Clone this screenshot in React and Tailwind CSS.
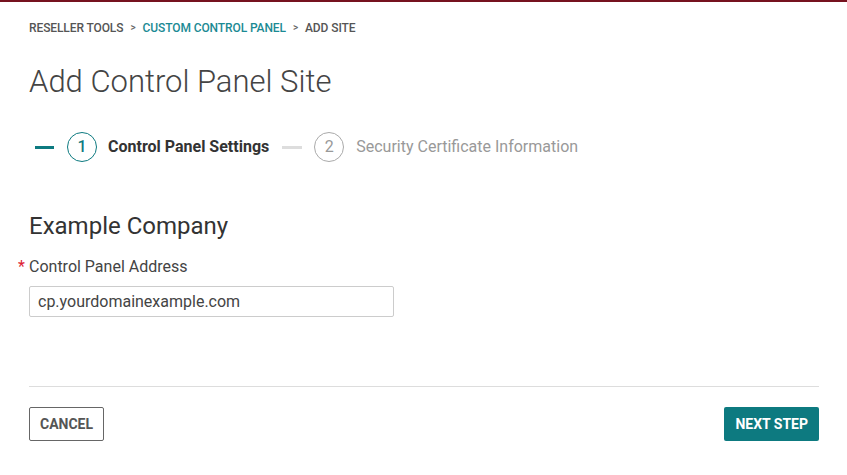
export default function App() {
  return (
    <div className="min-h-[475px] w-[847px] border-t-2 border-[#76121f] bg-white font-['Roboto',sans-serif]">
      <div className="px-[29px] pt-[18px]">
        <nav className="flex items-center gap-[7px] text-[12px] font-medium uppercase leading-[16px] tracking-[-0.1px]">
          <span className="text-[#555]">Reseller Tools</span>
          <span className="text-[10px] text-[#666]">&gt;</span>
          <span className="text-[#1b8a94]">Custom Control Panel</span>
          <span className="text-[10px] text-[#666]">&gt;</span>
          <span className="text-[#555]">Add Site</span>
        </nav>

        <h1 className="mt-[26px] text-[31px] font-light leading-[40px] text-[#444]">Add Control Panel Site</h1>

        <div className="mt-[30px] flex items-center">
          <span className="ml-[6px] h-[3px] w-[19px] bg-[#0d7a80]" />
          <span className="ml-[13px] grid h-[30px] w-[30px] place-items-center rounded-full border border-[#0d7a80] text-[16px] font-medium text-[#0d7a80]">1</span>
          <span className="ml-[11px] text-[16px] font-bold text-[#333]">Control Panel Settings</span>
          <span className="ml-[13px] h-[3px] w-[20px] bg-[#ddd]" />
          <span className="ml-[12px] grid h-[30px] w-[30px] place-items-center rounded-full border border-[#aaa] text-[16px] text-[#999]">2</span>
          <span className="ml-[12px] text-[16px] text-[#999]">Security Certificate Information</span>
        </div>

        <h2 className="mt-[48px] text-[24px] leading-[32px] text-[#333]">Example Company</h2>

        <label className="relative mt-[15px] block text-[16px] leading-[20px] text-[#444]">
          <span className="absolute left-[-11px] top-0 text-[#d23]">*</span>
          Control Panel Address
        </label>
        <input
          readOnly
          value="cp.yourdomainexample.com"
          className="mt-[9px] block h-[31px] w-[365px] rounded-[2px] border border-[#ccc] px-[8px] text-[16px] text-[#444] outline-none"
        />

        <div className="mt-[69px] w-[790px] border-t border-[#ddd]" />

        <div className="mt-[20px] flex w-[790px] items-center justify-between">
          <button className="h-[34px] rounded-[2px] border border-[#666] px-[10px] text-[14px] font-bold uppercase text-[#555]">Cancel</button>
          <button className="h-[34px] rounded-[2px] bg-[#0d7a80] px-[11px] text-[14px] font-bold uppercase text-white">Next Step</button>
        </div>
      </div>
    </div>
  );
}
